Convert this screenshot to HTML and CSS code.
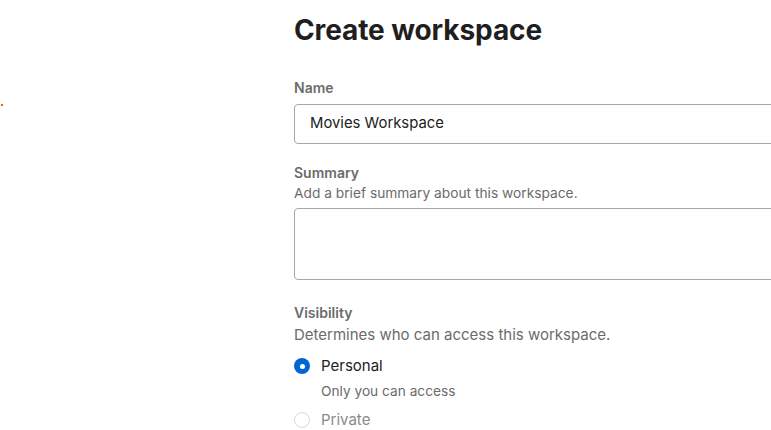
FILE: index.html
```html
<!DOCTYPE html>
<html lang="en">
<head>
<meta charset="utf-8">
<title>Create workspace</title>
<link rel="stylesheet" href="styles.css">
</head>
<body>
<span class="marker"></span>
<main class="page">
  <form class="form">
    <h1 class="title">Create workspace</h1>
    <div class="field">
      <label class="label" for="name">Name</label>
      <input class="input" id="name" type="text" value="Movies Workspace">
    </div>
    <div class="field field-summary">
      <label class="label" for="summary">Summary</label>
      <div class="desc desc-summary">Add a brief summary about this workspace.</div>
      <textarea class="textarea" id="summary"></textarea>
    </div>
    <div class="field field-visibility">
      <div class="label">Visibility</div>
      <div class="desc desc-visibility">Determines who can access this workspace.</div>
      <div class="options">
        <div class="option">
          <span class="radio radio-on"></span>
          <div class="option-text">
            <div class="option-title">Personal</div>
            <div class="option-desc">Only you can access</div>
          </div>
        </div>
        <div class="option option-disabled">
          <span class="radio"></span>
          <div class="option-text">
            <div class="option-title">Private</div>
          </div>
        </div>
      </div>
    </div>
  </form>
</main>
</body>
</html>
```
FILE: styles.css
```css
html, body {
  margin: 0;
  padding: 0;
  background: #ffffff;
  overflow: hidden;
  height: 430px;
}
body {
  font-family: "Inter", "Noto Sans", sans-serif;
  color: #212121;
  position: relative;
}
.marker {
  position: absolute;
  left: 1px;
  top: 104px;
  width: 2px;
  height: 2px;
  background: #ff5a00;
}
.page {
  padding-left: 294px;
}
.form {
  width: 640px;
  display: flex;
  flex-direction: column;
}
.title {
  margin: 12px 0 0 0;
  font-size: 28px;
  line-height: 36px;
  font-weight: 650;
  color: #1f1f1f;
  letter-spacing: -0.1px;
}
.field {
  display: flex;
  flex-direction: column;
}
.field:first-of-type {
  margin-top: 30px;
}
.label {
  font-size: 14px;
  line-height: 20px;
  font-weight: 600;
  color: #6b6b6b;
}
.field > .label + .input {
  margin-top: 6px;
}
.input {
  box-sizing: border-box;
  height: 40px;
  border: 1px solid #a6a6a6;
  border-radius: 4px;
  padding: 0 15px 3px 15px;
  font-family: inherit;
  font-size: 14.85px;
  color: #212121;
  outline: none;
}
.field-summary {
  margin-top: 19px;
}
.desc {
  font-size: 14px;
  line-height: 20px;
  color: #6b6b6b;
}
.desc-summary {
  font-size: 13.75px;
}
.desc-visibility {
  font-size: 15px;
  margin-top: 2px;
}
.textarea {
  box-sizing: border-box;
  display: block;
  margin-top: 5px;
  height: 72px;
  border: 1px solid #a6a6a6;
  border-radius: 4px;
  resize: none;
  font-family: inherit;
  outline: none;
}
.field-visibility {
  margin-top: 23px;
}
.options {
  display: flex;
  flex-direction: column;
  margin-top: 11px;
  gap: 9px;
}
.option {
  display: flex;
  align-items: flex-start;
  gap: 11px;
}
.radio {
  box-sizing: border-box;
  flex: none;
  width: 16px;
  height: 16px;
  margin-top: 2px;
  border-radius: 50%;
  border: 1px solid #d9d9d9;
  background: #fff;
  display: flex;
  align-items: center;
  justify-content: center;
}
.radio-on {
  border: none;
  background: #0265d2;
}
.radio-on::after {
  content: "";
  width: 5px;
  height: 5px;
  border-radius: 50%;
  background: #fff;
}
.option-title {
  font-size: 15px;
  line-height: 20px;
  color: #212121;
}
.option-desc {
  margin-top: 5px;
  font-size: 13.7px;
  line-height: 20px;
  color: #6b6b6b;
}
.option-disabled .option-title {
  color: #8a8a8a;
}
```
